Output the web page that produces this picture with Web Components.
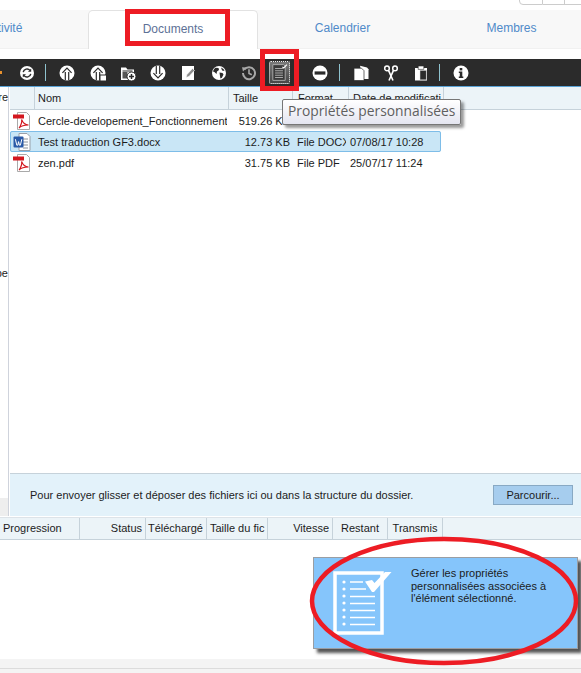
<!DOCTYPE html>
<html lang="fr">
<head>
<meta charset="utf-8">
<title>Documents</title>
<style>
html, body { margin: 0; height: 673px; overflow: hidden; background: #fff; font-family: "Liberation Sans", Arial, sans-serif; }
</style>
</head>
<body>
<doc-app>
  <doc-tabs>
    <doc-tab style="--w: 88px; --indent: -82px">Activité</doc-tab>
    <doc-tab active style="--w: 170px">Documents</doc-tab>
    <doc-tab style="--w: 169px">Calendrier</doc-tab>
    <doc-tab style="--w: 169px">Membres</doc-tab>
  </doc-tabs>
  <doc-toolbar></doc-toolbar>
  <doc-browser></doc-browser>
  <doc-transfers></doc-transfers>
  <doc-footer></doc-footer>
  <doc-tooltip>Propriétés personnalisées</doc-tooltip>
  <doc-balloon>Gérer les propriétés personnalisées associées à l'élément sélectionné.</doc-balloon>
  <doc-marks></doc-marks>
</doc-app>

<script>
const DARK = "#2b2b2b";

// toolbar icons, all on a 16x16 box
const ICONS = {
    refresh: `<circle cx="8" cy="8" r="7" fill="#fff"/>
        <path d="M4.2 7.2A3.9 3.9 0 0 1 11 5.4M11.8 8.8A3.9 3.9 0 0 1 5 10.6" fill="none" stroke="${DARK}" stroke-width="1.4"/>
        <path d="M12.2 3.6v3.2H9zM3.8 12.4V9.2H7z" fill="${DARK}"/>`,
    up: `<circle cx="8" cy="8" r="7.5" fill="#fff"/>
        <path d="M3.4 7.8 8 3l4.600 4.800M6.300 7v8M9.700 7v8" fill="none" stroke="${DARK}" stroke-width="1.200"/>`,
    upfile: `<circle cx="8" cy="8" r="7.5" fill="#fff"/>
        <path d="M3.4 7.8 8 3l4.600 4.800M6.300 7v8M9.700 7v8" fill="none" stroke="${DARK}" stroke-width="1.200"/>
        <rect x="10" y="10" width="6.5" height="6" fill="#fff" stroke="${DARK}"/>`,
    folder: `<path d="M1 2.5h5l1.5 2H14v5H8v5.5H1z" fill="#fff"/>
        <path d="M2.5 6h10" stroke="${DARK}"/><path d="M2.5 7h5v6.500h-5z" fill="${DARK}" opacity=".8"/>
        <circle cx="11.5" cy="11.5" r="4.5" fill="#fff" stroke="${DARK}"/>
        <path d="M9 11.5h5M11.5 9v5" stroke="${DARK}" stroke-width="1.5"/>`,
    down: `<circle cx="8" cy="8" r="7.5" fill="#fff"/>
        <path d="M3.4 8.200 8 13l4.600-4.800M6.300 9V1M9.700 9V1" fill="none" stroke="${DARK}" stroke-width="1.200"/>`,
    edit: `<path d="M2 1h12v14H2z" fill="#fff"/>
        <path d="M6 12.5l1-3 5.5-6 2 2-5.5 6z" fill="#8c8c8c" stroke="#fff" stroke-width=".6"/>`,
    globe: `<circle cx="8" cy="8" r="7" fill="#fff"/>
        <path d="M4.5 2.8 7.5 3 8 5 6 6.5 5.5 9 3.4 7 2 6.6C2.3 5 3.2 3.7 4.5 2.8zM8.5 7.5l3 .5 1 1.6-1.6 3.2-1.5.6-.5-3.2zM10 2.4l2.5 1.6 1 2-2.4-.4z" fill="${DARK}"/>`,
    history: `<path d="M3.2 4.6A6 6 0 1 1 2 8" fill="none" stroke="#a8a8a8" stroke-width="2"/>
        <path d="M1 2.2 5.6 2.4 2 6.4z" fill="#a8a8a8"/>
        <path d="M8 4.2V8.4l2.8 1.4" fill="none" stroke="#a8a8a8" stroke-width="1.6"/>`,
    minus: `<circle cx="8" cy="8" r="7.5" fill="#fff"/><rect x="2.6" y="6.4" width="10.8" height="3.2" fill="${DARK}"/>`,
    copy: `<path d="M7 .8 14 2.5l1.5 1.8V14L10 14z" fill="#fff"/>
        <path d="M1 3.2h7.5l2.5 2.5V15.5H1z" fill="#fff" stroke="${DARK}" stroke-width=".7"/>`,
    scissors: `<circle cx="4" cy="3.4" r="2.3" fill="none" stroke="#fff" stroke-width="1.5"/>
        <circle cx="12" cy="3.4" r="2.3" fill="none" stroke="#fff" stroke-width="1.5"/>
        <path d="M5.4 5.2 10 15.5M10.6 5.2 6 15.5" stroke="#fff" stroke-width="1.6"/>`,
    clipboard: `<path d="M2 3h12v12.5H2z" fill="#fff"/><path d="M5.2 1h5.6v3.4H5.2z" fill="#fff" stroke="${DARK}" stroke-width=".6"/>
        <path d="M7 5.4h6.4v9.4H7z" fill="${DARK}" stroke="#ddd" stroke-width=".5"/>`,
    info: `<circle cx="8" cy="8" r="7.5" fill="#fff"/><rect x="6.7" y="3" width="2.6" height="2.4" fill="${DARK}"/>
        <path d="M5.8 6.6h3.5v5h1v1.4H5.8v-1.4h1v-3.6h-1z" fill="${DARK}"/>`,
    props: `<path d="M2.500 1h9.500l1.500 1.500V15H2.500z" fill="#3a3a3a" stroke="#b0b0b0" stroke-width=".8"/>
        <path d="M4.500 4.500h7M4.500 6.500h7M4.500 8.500h7M4.500 10.500h7M4.500 12.500h7" stroke="#a8a8a8" stroke-width=".9"/>
        <path d="M11 3l1.200 1L15 1" fill="none" stroke="#fff" stroke-width="1"/>`
};

customElements.define("doc-app", class extends HTMLElement {
    constructor() {
        super();
        this.attachShadow({mode: "open"}).innerHTML = `
            <style>
            :host { display: flex; flex-direction: column; position: relative; width: 581px; height: 673px; overflow: hidden; font-size: 11px; color: #1c1c1c; }
            </style>
            <slot></slot>
        `;
    }
});

customElements.define("doc-tabs", class extends HTMLElement {
    constructor() {
        super();
        this.attachShadow({mode: "open"}).innerHTML = `
            <style>
            :host { display: block; position: relative; flex: none; padding-top: 10px; margin-bottom: 10px; background: linear-gradient(#fff 10px, #f8f8f8 10px, #f8f8f8 48px, #eee 48px, #f4f4f4 49px); }
            .strip { display: flex; height: 39px; }
            .pager { position: absolute; right: -6px; top: -2px; display: flex; }
            .pager i { display: block; width: 21px; height: 5px; border: 1px solid #ccc; border-left-width: 0; background: #fff; }
            .pager i:first-child { border-left-width: 1px; border-radius: 0 0 0 4px; width: 22px; }
            </style>
            <div class="pager"><i></i><i></i><i></i></div>
            <div class="strip"><slot></slot></div>
        `;
    }
});

customElements.define("doc-tab", class extends HTMLElement {
    constructor() {
        super();
        this.attachShadow({mode: "open"}).innerHTML = `
            <style>
            :host { display: flex; box-sizing: border-box; align-items: center; justify-content: center; flex: none; width: var(--w); height: 39px; padding-bottom: 3px; font-size: 12px; color: #4f8ac9; white-space: nowrap; overflow: hidden; }
            :host([active]) { background: #fff; border: 1px solid #e2e2e2; border-bottom: 0; border-radius: 5px 5px 0 0; color: #5d7196; }
            span { display: block; margin-left: var(--indent, 0); }
            </style>
            <span><slot></slot></span>
        `;
    }
});

customElements.define("doc-icon", class extends HTMLElement {
    constructor() {
        super();
        const name = this.getAttribute("name");
        this.attachShadow({mode: "open"}).innerHTML = `
            <style>
            :host { display: flex; flex: none; align-items: center; justify-content: center; width: 30.25px; height: 27px; }
            :host([selected]) .box { display: flex; align-items: center; justify-content: center; box-sizing: border-box; width: 21px; height: 23px; border: 1px dotted #eee; background: linear-gradient(#7a7a7a, #474747); border-radius: 2px; }
            svg { width: 16px; height: 16px; display: block; }
            :host([selected]) svg { width: 18px; height: 19px; }
            </style>
            <div class="box"><svg viewBox="0 0 16 16">${ICONS[name]}</svg></div>
        `;
    }
});

customElements.define("doc-toolbar", class extends HTMLElement {
    constructor() {
        super();
        const tool = n => `<doc-icon name="${n}"></doc-icon>`;
        this.attachShadow({mode: "open"}).innerHTML = `
            <style>
            :host { display: flex; flex: none; align-items: center; height: 27px; background: ${DARK}; border-bottom: 1px solid #5aa3d6; }
            .arrow { width: 2px; height: 3px; background: #e8912d; margin-right: 10px; flex: none; }
            .sep { width: 1px; height: 17px; background: #8fc3cf; margin: 0 6px 0 3px; flex: none; }
            .gap { width: 11px; flex: none; }
            </style>
            <i class="arrow"></i>
            ${tool("refresh")}<i class="sep"></i>
            ${["up", "upfile", "folder", "down", "edit", "globe", "history"].map(tool).join("")}
            <doc-icon name="props" selected></doc-icon>
            <i class="gap"></i>
            ${tool("minus")}<i class="sep"></i>
            ${["copy", "scissors", "clipboard"].map(tool).join("")}<i class="sep"></i>
            ${tool("info")}
        `;
    }
});

customElements.define("doc-fileicon", class extends HTMLElement {
    constructor() {
        super();
        const word = this.getAttribute("type") === "docx";
        const art = word
            ? `<path d="M6 .5h8l3 3v14H6z" fill="#fff" stroke="#9a9fa8"/>
               <path d="M10 6h5M10 9h5M10 12h5M10 15h5" stroke="#8a9099"/>
               <rect x=".5" y="3.5" width="10" height="11" rx="1" fill="#2a5aa8"/>
               <path d="M2.4 6.2l1.4 6h1l.8-3.6.8 3.6h1l1.4-6" fill="none" stroke="#fff" stroke-width="1"/>`
            : `<path d="M4.5.5h9l3 3v14h-12z" fill="#fff" stroke="#a9a9a9"/>
               <rect x="0" y="2.5" width="11" height="4" fill="#d3171f"/>
               <path d="M6 16c1.5-2 3-6 2.6-8.5C10 11 12 13 15.5 13c-3 0-7 .5-9.5 3z" fill="none" stroke="#d3171f" stroke-width="1.1"/>`;
        this.attachShadow({mode: "open"}).innerHTML = `
            <style>
            :host { display: block; width: 18px; height: 18px; }
            svg { display: block; width: 18px; height: 18px; }
            </style>
            <svg viewBox="0 0 18 18">${art}</svg>
        `;
    }
});

const COLS = "25px 194px 64px 56px";

customElements.define("doc-filerow", class extends HTMLElement {
    constructor() {
        super();
        const a = n => this.getAttribute(n);
        this.attachShadow({mode: "open"}).innerHTML = `
            <style>
            :host { display: grid; grid-template-columns: ${COLS} 92px; box-sizing: border-box; height: 21px; align-items: center; width: 431px; }
            :host([selected]) { background: #c9e6f6; outline: 1px solid #7ebde8; outline-offset: -1px; border-radius: 2px; }
            div { overflow: hidden; white-space: nowrap; }
            .ico { padding-left: 3px; }
            .name { padding-left: 3px; width: 189px; }
            .size { text-align: right; padding-right: 3px; }
            .fmt { padding-left: 4px; width: 49px; }
            .date { padding-left: 1px; }
            </style>
            <div class="ico"><doc-fileicon type="${a("type")}"></doc-fileicon></div>
            <div class="name">${a("name")}</div>
            <div class="size">${a("size")}</div>
            <div class="fmt">${a("format")}</div>
            <div class="date">${a("date")}</div>
        `;
    }
});

customElements.define("doc-browser", class extends HTMLElement {
    constructor() {
        super();
        this.attachShadow({mode: "open"}).innerHTML = `
            <style>
            :host { display: flex; flex: none; height: 429px; }
            .tree { box-sizing: border-box; width: 9px; margin-right: 1px; flex: none; border-right: 1px solid #cfd3dc; overflow: hidden; display: flex; flex-direction: column; }
            .tree span { display: block; white-space: nowrap; direction: rtl; width: 8px; line-height: 12px; }
            .tree .a { margin-top: 4px; }
            .tree .b { margin-top: 164px; }
            .tree .fill { margin-top: auto; height: 18px; background: #eee; }
            .main { flex: 1; min-width: 0; display: flex; flex-direction: column; background: #fff; }
            .head { display: grid; grid-template-columns: ${COLS} 95px; height: 22px; background: #ecf4f8; border-bottom: 1px solid #c6d2da; flex: none; }
            .head div { display: flex; align-items: center; border-right: 1px solid #c6d2da; padding-left: 3px; overflow: hidden; white-space: nowrap; }
            .head div:nth-child(1) { padding: 0; }
            .head div:nth-child(3) { padding-left: 4px; }
            .head div:nth-child(4) { padding-left: 5px; }
            .head div:nth-child(5) { padding-left: 4px; }
            .list { flex: 1; }
            .drop { display: flex; flex: none; align-items: center; justify-content: space-between; box-sizing: border-box; height: 43px; padding: 0 8px 0 20px; background: #e3f2fa; border-top: 1px solid #c6d2da; }
            .btn { box-sizing: border-box; width: 80px; height: 20px; line-height: 18px; text-align: center; background: #a6cdee; border: 1px solid #88a9c4; }
            </style>
            <div class="tree"><span class="a">ïre</span><span class="b">pe</span><div class="fill"></div></div>
            <div class="main">
                <div class="head"><div></div><div>Nom</div><div>Taille</div><div>Format</div><div>Date de modificati</div></div>
                <div class="list">
                    <doc-filerow type="pdf" name="Cercle-developement_Fonctionnement_2017.pdf" size="519.26 KB" format="File PDF" date="25/07/17 10:28"></doc-filerow>
                    <doc-filerow selected type="docx" name="Test traduction GF3.docx" size="12.73 KB" format="File DOCX" date="07/08/17 10:28"></doc-filerow>
                    <doc-filerow type="pdf" name="zen.pdf" size="31.75 KB" format="File PDF" date="25/07/17 11:24"></doc-filerow>
                </div>
                <div class="drop">
                    <span>Pour envoyer glisser et déposer des fichiers ici ou dans la structure du dossier.</span>
                    <div class="btn">Parcourir...</div>
                </div>
            </div>
        `;
    }
});

customElements.define("doc-transfers", class extends HTMLElement {
    constructor() {
        super();
        this.attachShadow({mode: "open"}).innerHTML = `
            <style>
            :host { display: flex; flex-direction: column; flex: none; height: 142px; margin-top: 1px; background: #fff; }
            .head { display: grid; grid-template-columns: 80px 66px 61px 61px 65px 55px 55px; height: 20px; padding-bottom: 1px; background: #ecf4f8; border-top: 1px solid #dde3e8; border-bottom: 1px solid #c6d2da; flex: none; }
            .head div { display: flex; align-items: center; box-sizing: border-box; margin-bottom: -1px; border-right: 1px solid #c6d2da; padding: 0 3px 2px; overflow: hidden; white-space: nowrap; }
            .head .r { justify-content: flex-end; }
            .head .c { justify-content: center; }
            </style>
            <div class="head">
                <div>Progression</div>
                <div class="r">Status</div>
                <div class="r">Téléchargé</div>
                <div>Taille du fic</div>
                <div class="r">Vitesse</div>
                <div class="c">Restant</div>
                <div class="c">Transmis</div>
            </div>
        `;
    }
});

customElements.define("doc-footer", class extends HTMLElement {
    constructor() {
        super();
        this.attachShadow({mode: "open"}).innerHTML = `
            <style>
            :host { display: block; flex: 1; background: #f4f4f4; }
            div { height: 9px; border-bottom: 1px solid #dcdcdc; }
            </style>
            <div></div>
        `;
    }
});

customElements.define("doc-tooltip", class extends HTMLElement {
    constructor() {
        super();
        this.attachShadow({mode: "open"}).innerHTML = `
            <style>
            :host { position: absolute; left: 282px; top: 99px; box-sizing: border-box; width: 179px; height: 26px; padding-left: 5px; line-height: 22px; font-family: "Open Sans", sans-serif; font-size: 13.8px; color: #5f5f5f; white-space: nowrap; background: linear-gradient(#fff, #e4e5f0); border: 1px solid #767676; border-radius: 2px; box-shadow: 3px 3px 3px rgba(0,0,0,.4); }
            </style>
            <slot></slot>
        `;
    }
});

customElements.define("doc-balloon", class extends HTMLElement {
    constructor() {
        super();
        this.attachShadow({mode: "open"}).innerHTML = `
            <style>
            :host { position: absolute; left: 313px; top: 557px; box-sizing: border-box; width: 265px; height: 92px; background: #85c5fb; border: 1px solid #9a9ea3; box-shadow: 4px 4px 3px #555; display: flex; }
            svg { display: block; width: 60px; height: 65px; margin: 13px 0 0 19px; flex: none; }
            p { margin: 9px 0 0 18px; width: 160px; line-height: 12.5px; font-size: 11px; color: #1c1c1c; }
            </style>
            <svg viewBox="0 0 60 65">
                <rect x="2" y="2" width="47" height="60" fill="none" stroke="#fff" stroke-width="3.500"/>
                <g fill="#fff">
                    <circle cx="11" cy="11" r="1.6"/><circle cx="11" cy="18" r="1.6"/><circle cx="11" cy="25" r="1.6"/><circle cx="11" cy="32" r="1.6"/>
                    <circle cx="11" cy="39" r="1.6"/><circle cx="11" cy="46" r="1.6"/><circle cx="11" cy="53" r="1.6"/>
                </g>
                <path d="M17 11h13M17 18h16M17 25.500h25M17 32.500h25M17 39.500h25M17 46.500h25M17 53.500h25" stroke="#fff" stroke-width="1.300"/>
                <path d="M32 10.500l7-1.500 2.500 3L52 1h6.500L41 21h-2z" fill="#fff"/>
            </svg>
            <p><slot></slot></p>
        `;
    }
});

// the red marks drawn by hand over the capture
customElements.define("doc-marks", class extends HTMLElement {
    constructor() {
        super();
        this.attachShadow({mode: "open"}).innerHTML = `
            <style>
            :host { position: absolute; inset: 0; pointer-events: none; }
            svg { display: block; width: 581px; height: 673px; }
            </style>
            <svg viewBox="0 0 581 673" fill="none" stroke="#ed1c24" stroke-width="5">
                <rect x="127.500" y="11.500" width="100" height="32"/>
                <rect x="262.500" y="51.500" width="34" height="37"/>
                <ellipse cx="444" cy="601" rx="132" ry="62" stroke-width="4.500"/>
            </svg>
        `;
    }
});
</script>
</body>
</html>
